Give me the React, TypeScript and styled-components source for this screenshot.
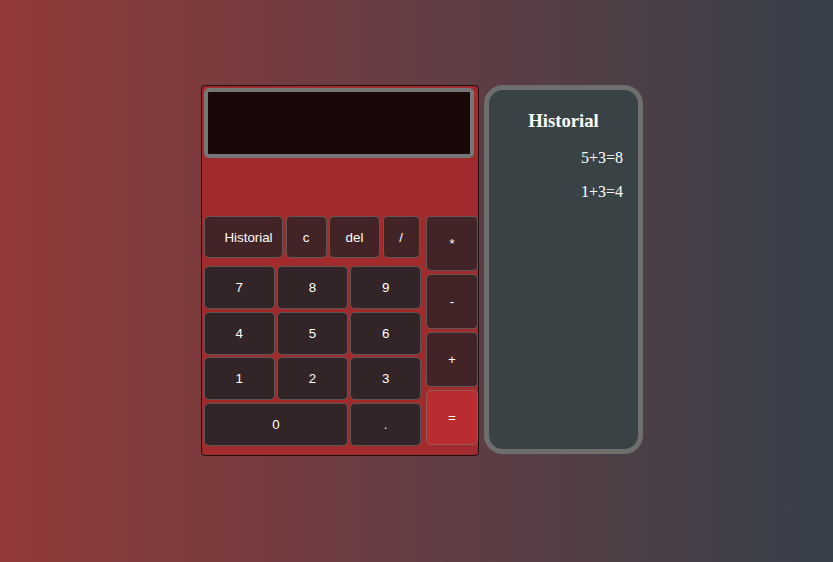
import styled, {createGlobalStyle} from "styled-components";

const GlobalStyle = createGlobalStyle`
    html, body {
        margin: 0;
        height: 100%;
    }
    body {
        background: linear-gradient(to right, #933a3a, #36404b);
        font-family: "Liberation Serif", serif;
    }
`

const Page = styled.main`
    display: flex;
    align-items: flex-start;
    gap: 5px;
    padding: 85px 0 0 201px;
`

const Calculator = styled.div`
    width: 274px;
    height: 367px;
    display: flex;
    flex-direction: column;
    background-color: #a02a2c;
    border: 1px solid #1c1010;
    border-radius: 4px;
    padding: 2px 0 0 2px;
`

const Display = styled.div`
    width: 262px;
    height: 62px;
    background-color: #1a0808;
    border: 4px solid #777777;
    border-radius: 5px;
`

const Keypad = styled.div`
    display: flex;
    gap: 5px;
    margin-top: 58px;
`

const LeftKeys = styled.div`
    display: flex;
    flex-direction: column;
    width: 217px;
`

const TopRow = styled.div`
    display: flex;
    gap: 2.5px;
    margin-bottom: 8px;
`

const DigitGrid = styled.div`
    display: grid;
    grid-template-columns: repeat(3, 1fr);
    grid-auto-rows: 43px;
    gap: 2.5px;
`

const OperatorColumn = styled.div`
    display: flex;
    flex-direction: column;
    gap: 3px;
    width: 52px;
`

type KeyProps = {$tone?: "digit" | "op" | "equals"; $w?: number; $span?: number; $shift?: number}

const Key = styled.button<KeyProps>`
    font: 13.333px "Liberation Sans", Arial, sans-serif;
    color: #ffffff;
    border: 1px solid rgba(128, 128, 128, 0.55);
    border-radius: 5px;
    padding: 0 0 0 ${p => p.$shift ?? 0}px;
    cursor: pointer;
    background-color: ${p => p.$tone === "equals" ? "#b92c2f" : p.$tone === "op" ? "#432426" : "#332527"};
    ${p => p.$w ? `width: ${p.$w}px; height: 42px;` : ""}
    ${p => p.$span ? `grid-column: span ${p.$span};` : ""}
`

const OpKey = styled(Key)`
    height: 55px;
    width: 100%;
`

const HistoryPanel = styled.aside`
    width: 159px;
    height: 369px;
    box-sizing: border-box;
    background-color: #394244;
    border: 5px solid #6e6e6e;
    border-radius: 19px;
    color: #ffffff;
    padding: 0 15px 0 0;
`

const HistoryTitle = styled.h3`
    font-size: 18.72px;
    font-weight: bold;
    text-align: center;
    margin: 20px 0 17px 15px;
`

const HistoryEntry = styled.p`
    font-size: 16px;
    text-align: right;
    margin: 16px 0;
`

const digits = ["7", "8", "9", "4", "5", "6", "1", "2", "3"]
const history = ["5+3=8", "1+3=4"]

const App = () => {
    return (
        <>
            <GlobalStyle/>
            <Page>
                <Calculator>
                    <Display/>
                    <Keypad>
                        <LeftKeys>
                            <TopRow>
                                <Key $tone="op" $w={79} $shift={10}>Historial</Key>
                                <Key $tone="op" $w={41}>c</Key>
                                <Key $tone="op" $w={51}>del</Key>
                                <Key $tone="op" $w={37}>/</Key>
                            </TopRow>
                            <DigitGrid>
                                {digits.map(d => <Key key={d} $tone="digit">{d}</Key>)}
                                <Key $tone="digit" $span={2}>0</Key>
                                <Key $tone="digit">.</Key>
                            </DigitGrid>
                        </LeftKeys>
                        <OperatorColumn>
                            <OpKey $tone="op">*</OpKey>
                            <OpKey $tone="op">-</OpKey>
                            <OpKey $tone="op">+</OpKey>
                            <OpKey $tone="equals">=</OpKey>
                        </OperatorColumn>
                    </Keypad>
                </Calculator>
                <HistoryPanel>
                    <HistoryTitle>Historial</HistoryTitle>
                    {history.map(h => <HistoryEntry key={h}>{h}</HistoryEntry>)}
                </HistoryPanel>
            </Page>
        </>
    )
}

export default App
